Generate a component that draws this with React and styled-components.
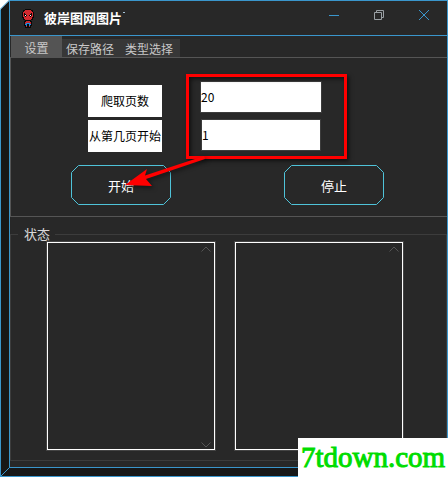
import React, { useState } from "react";
import styled, { createGlobalStyle } from "styled-components";

const BLUE = "#3a96cc";
const PANEL = "#282828";

const GlobalStyle = createGlobalStyle`
  * {
    box-sizing: border-box;
  }
  body {
    margin: 0;
    background: #fff;
    font-family: "Noto Sans CJK SC", sans-serif;
    font-size: 12px;
    color: #d8d8d8;
  }
  button, input, textarea {
    font: inherit;
    color: inherit;
    border-radius: 0;
    outline: none;
  }
`;

const tabs = ["设置", "保存路径", "类型选择"];

function ScrollMark({ down }) {
  return (
    <Mark $down={down} width="12" height="6" viewBox="0 0 12 6" aria-hidden="true">
      <path d={down ? "M1.5 0.5L6 5L10.5 0.5" : "M1.5 5.5L6 1L10.5 5.5"} />
    </Mark>
  );
}

function FrameButton({ children }) {
  return (
    <CutButton type="button">
      <svg viewBox="0 0 100 40" aria-hidden="true">
        <path d="M7.5 0.5H92.5L99.5 7.5V32.5L92.5 39.5H7.5L0.5 32.5V7.5Z" />
      </svg>
      <span>{children}</span>
    </CutButton>
  );
}

function HeroIcon() {
  return (
    <svg width="14" height="19" viewBox="0 0 14 19" shapeRendering="crispEdges" aria-hidden="true">
      <path fill="#080808" d="M4 0h6v1h2v2h1v6h-1v2h-2v1h1v5h-1v2H4v-2H3v-5h1v-1H2V9H1V3h1V1h2z" />
      <path fill="#d42a30" d="M4 1h6v1h1v1h1v5h-1v2h-1v1H4v-1H3V8H2V3h1V2h1z" />
      <path fill="#080808" d="M3 4h1v1h1v1h1v1H5v1H4V7H3zM11 4h-1v1H9v1H8v1h1v1h1V7h1z" />
      <path fill="#fff" d="M4 6h1v1H4zM9 6h1v1H9z" />
      <path fill="#c5272d" d="M5 12h4v2H5zM4 13h1v2H4zM9 13h1v2H9zM5 17h1v1H5zM8 17h1v1H8z" />
      <path fill="#1e8bdc" d="M5 14h4v1H5zM4 15h2v1H4zM8 15h2v1H8zM5 16h1v1H5zM8 16h1v1H8z" />
    </svg>
  );
}

export default function App() {
  const [active, setActive] = useState(0);
  const [pages, setPages] = useState("20");
  const [start, setStart] = useState("1");

  return (
    <Shell>
      <GlobalStyle />
      <TopCorner width="10" height="10" viewBox="0 0 10 10" aria-hidden="true">
        <path fill="#fff" d="M0 0H10L0 10Z" />
        <path stroke={BLUE} d="M0 9.5L9.5 0" />
      </TopCorner>
      <BottomCorner width="10" height="10" viewBox="0 0 10 10" aria-hidden="true">
        <path stroke={BLUE} d="M0.5 9.5L9.5 0.5" />
      </BottomCorner>

      <Window>
        <TitleBar>
          <HeroIcon />
          <Title>彼岸图网图片</Title>
          <WindowButton type="button" aria-label="最小化">
            <svg width="12" height="12" stroke={BLUE} fill="none">
              <path d="M1 6.5H11" />
            </svg>
          </WindowButton>
          <WindowButton type="button" aria-label="还原">
            <svg width="12" height="12" stroke="#9aa0a4" fill="none">
              <path d="M1.5 3.5H8.5V10.5H1.5ZM3.5 3V1.5H10.5V8.5H9" />
            </svg>
          </WindowButton>
          <WindowButton type="button" aria-label="关闭">
            <svg width="12" height="12" stroke={BLUE} fill="none">
              <path d="M1 1L11 11M11 1L1 11" />
            </svg>
          </WindowButton>
        </TitleBar>

        <TabBar role="tablist">
          {tabs.map((name, i) => (
            <Tab
              key={name}
              type="button"
              role="tab"
              aria-selected={active === i}
              $active={active === i}
              onClick={() => setActive(i)}
            >
              {name}
            </Tab>
          ))}
        </TabBar>

        <Pane role="tabpanel">
          <Form>
            <Labels>
              <Label htmlFor="pages">爬取页数</Label>
              <Label htmlFor="start">从第几页开始</Label>
            </Labels>
            <Fields>
              <Input id="pages" $width={122} value={pages} onChange={(e) => setPages(e.target.value)} />
              <Input id="start" $width={120} value={start} onChange={(e) => setStart(e.target.value)} />
              <Callout />
              <Arrow width="84" height="40" viewBox="0 0 84 40" aria-hidden="true">
                <path fill="red" d="M81 3L22 22.5L24 16L2 32L29 33L23 26L82 6Z" />
              </Arrow>
            </Fields>
          </Form>
          <Actions>
            <FrameButton>开始</FrameButton>
            <FrameButton>停止</FrameButton>
          </Actions>
        </Pane>

        <Status>
          <legend>状态</legend>
          <Logs>
            {["左侧状态", "右侧状态"].map((name) => (
              <Log key={name}>
                <textarea aria-label={name} readOnly />
                <ScrollMark />
                <ScrollMark down />
              </Log>
            ))}
          </Logs>
        </Status>
      </Window>

      <SiteMark>7tdown.com</SiteMark>
    </Shell>
  );
}

const Shell = styled.div`
  position: relative;
  display: flex;
  min-height: 100vh;
  padding: 0 0 8px 8px;
  border: 1px solid ${BLUE};
  background: #171717;
`;
const TopCorner = styled.svg`
  position: absolute;
  top: -1px;
  left: -1px;
  fill: none;
`;
const BottomCorner = styled(TopCorner)`
  top: auto;
  bottom: -1px;
`;
const Window = styled.main`
  flex: 1;
  min-width: 0;
  display: flex;
  flex-direction: column;
  padding-bottom: 6px;
  border: solid ${BLUE};
  border-width: 0 0 1px 1px;
  background: ${PANEL};
`;
const TitleBar = styled.header`
  display: flex;
  align-items: center;
  height: 35px;
  padding: 0 1px 0 11px;
  border-bottom: 1px solid ${BLUE};
`;
const Title = styled.h1`
  flex: 1;
  display: flex;
  margin: 0 0 0 9px;
  font-size: 13px;
  line-height: 20px;
  color: #fff;
  white-space: nowrap;
  /* clipped edge of the rest of the caption */
  &::after {
    content: "";
    width: 2px;
    height: 1px;
    margin: 4px 0 0 1px;
    background: #a8c4d8;
  }
`;
const WindowButton = styled.button`
  display: flex;
  align-items: center;
  align-self: flex-start;
  justify-content: center;
  width: 45px;
  height: 28px;
  padding: 0;
  border: 0;
  background: none;
`;
const TabBar = styled.div`
  display: flex;
  align-items: flex-end;
  height: 22px;
  padding-left: 1px;
  border-bottom: 1px solid #555;
`;
const Tab = styled.button`
  flex: none;
  width: ${(p) => (p.$active ? 51 : 59)}px;
  height: ${(p) => (p.$active ? 22 : 18)}px;
  margin-bottom: ${(p) => (p.$active ? -1 : 0)}px;
  padding: ${(p) => (p.$active ? "1px 0 0" : "1px 7px 0 4px")};
  border: 0;
  background: ${(p) => (p.$active ? "#545454" : "#373737")};
  color: #c8c8c8;
  line-height: 18px;
  white-space: nowrap;
`;
const Pane = styled.section`
  padding: 23px 0 11px;
  border: solid #555;
  border-width: 0 0 1px 1px;
`;
const Form = styled.div`
  display: flex;
  gap: 38px;
  padding-left: 77px;
`;
const Labels = styled.div`
  display: flex;
  flex-direction: column;
  gap: 3px;
  width: 74px;
  padding-top: 4px;
`;
const Label = styled.label`
  background: #fff;
  color: #000;
  line-height: 32px;
  text-align: center;
  white-space: nowrap;
`;
const Fields = styled.div`
  position: relative;
  display: flex;
  flex-direction: column;
  align-items: center;
  gap: 6px;
`;
const Input = styled.input`
  width: ${(p) => p.$width}px;
  height: 32px;
  padding: 0 0 2px;
  border: 1px solid #3c3c3c;
  background: #fff;
  color: #000;
`;
const Callout = styled.div`
  position: absolute;
  inset: -7px -25px -7px -14px;
  border: 3px solid red;
  box-shadow: 2px 2px 4px rgba(0, 0, 0, 0.6), inset 2px 2px 4px rgba(0, 0, 0, 0.6);
  pointer-events: none;
`;
const Arrow = styled.svg`
  position: absolute;
  top: 72px;
  left: -77px;
  z-index: 1;
  pointer-events: none;
  filter: drop-shadow(2px 2px 2px rgba(0, 0, 0, 0.5));
`;
const Actions = styled.div`
  display: flex;
  gap: 113px;
  padding: 13px 0 0 60px;
`;
const CutButton = styled.button`
  display: grid;
  place-items: center;
  width: 100px;
  height: 40px;
  padding: 0;
  border: 0;
  background: none;
  color: #fff;
  font-size: 13px;
  > * {
    grid-area: 1 / 1;
  }
  svg {
    width: 100px;
    height: 40px;
    fill: none;
    stroke: #4fc3d9;
  }
`;
const Status = styled.fieldset`
  flex: 1;
  display: flex;
  min-width: 0;
  margin: 10px 0 0;
  padding: 0 42px 9px 35px;
  border: 1px solid #3c3c3c;
  legend {
    margin-left: -28px;
    padding: 0 5px 0 6px;
    font-size: 13px;
    line-height: 14px;
  }
`;
const Logs = styled.div`
  flex: 1;
  display: flex;
  gap: 18px;
`;
const Log = styled.div`
  position: relative;
  flex: 1;
  display: flex;
  min-height: 200px;
  border: 1px solid #444;
  textarea {
    flex: 1;
    min-width: 0;
    padding: 4px;
    border: 1px solid #fff;
    background: transparent;
    resize: none;
  }
`;
const Mark = styled.svg`
  position: absolute;
  right: 3px;
  ${(p) => (p.$down ? "bottom: 2px" : "top: 4px")};
  fill: none;
  stroke: #555;
`;
const SiteMark = styled.div`
  position: absolute;
  right: -1px;
  bottom: -1px;
  width: 150px;
  background: #fff;
  color: #00dc00;
  font: 29px/39px "Liberation Serif", serif;
  -webkit-text-stroke: 1px #00dc00;
  text-align: center;
`;
